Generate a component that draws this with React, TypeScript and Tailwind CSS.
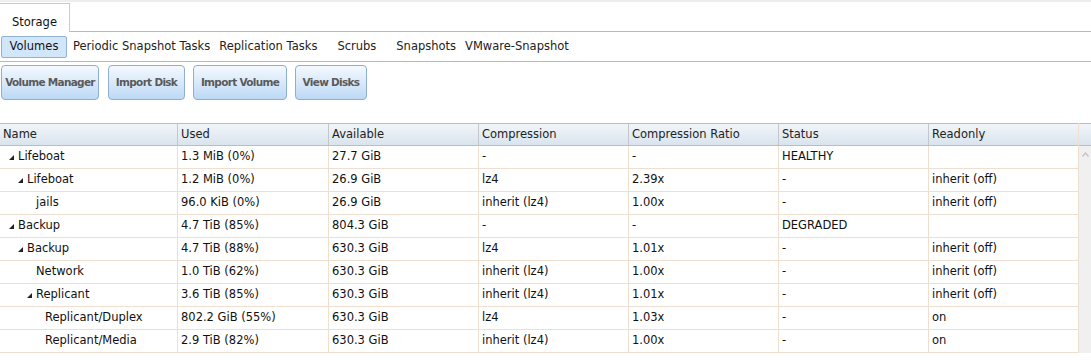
import React from 'react';

type Row = {
  name: string;
  level: number;
  open?: boolean;
  used: string;
  avail: string;
  comp: string;
  ratio: string;
  status: string;
  ro: string;
};

const rows: Row[] = [
  { name: 'Lifeboat', level: 0, open: true, used: '1.3 MiB (0%)', avail: '27.7 GiB', comp: '-', ratio: '-', status: 'HEALTHY', ro: '' },
  { name: 'Lifeboat', level: 1, open: true, used: '1.2 MiB (0%)', avail: '26.9 GiB', comp: 'lz4', ratio: '2.39x', status: '-', ro: 'inherit (off)' },
  { name: 'jails', level: 2, used: '96.0 KiB (0%)', avail: '26.9 GiB', comp: 'inherit (lz4)', ratio: '1.00x', status: '-', ro: 'inherit (off)' },
  { name: 'Backup', level: 0, open: true, used: '4.7 TiB (85%)', avail: '804.3 GiB', comp: '-', ratio: '-', status: 'DEGRADED', ro: '' },
  { name: 'Backup', level: 1, open: true, used: '4.7 TiB (88%)', avail: '630.3 GiB', comp: 'lz4', ratio: '1.01x', status: '-', ro: 'inherit (off)' },
  { name: 'Network', level: 2, used: '1.0 TiB (62%)', avail: '630.3 GiB', comp: 'inherit (lz4)', ratio: '1.00x', status: '-', ro: 'inherit (off)' },
  { name: 'Replicant', level: 2, open: true, used: '3.6 TiB (85%)', avail: '630.3 GiB', comp: 'inherit (lz4)', ratio: '1.01x', status: '-', ro: 'inherit (off)' },
  { name: 'Replicant/Duplex', level: 3, used: '802.2 GiB (55%)', avail: '630.3 GiB', comp: 'lz4', ratio: '1.03x', status: '-', ro: 'on' },
  { name: 'Replicant/Media', level: 3, used: '2.9 TiB (82%)', avail: '630.3 GiB', comp: 'inherit (lz4)', ratio: '1.00x', status: '-', ro: 'on' },
];

const subTabs = ['Periodic Snapshot Tasks', 'Replication Tasks', 'Scrubs', 'Snapshots', 'VMware-Snapshot'];
const subTabPad = ['ml-[6px]', 'ml-[9px]', 'ml-[20px]', 'ml-[20px]', 'ml-[9px]'];
const buttons = [
  { label: 'Volume Manager', cls: 'w-[98px] ml-px' },
  { label: 'Import Disk', cls: 'w-[77px] ml-[9px]' },
  { label: 'Import Volume', cls: 'w-[94px] ml-[8px]' },
  { label: 'View Disks', cls: 'w-[72px] ml-[8px]' },
];
const headers = ['Name', 'Used', 'Available', 'Compression', 'Compression Ratio', 'Status', 'Readonly'];
const colW = ['w-[177px]', 'w-[151px]', 'w-[150px]', 'w-[150px]', 'w-[150px]', 'w-[150px]', 'w-[150px]'];

function Expando() {
  return (
    <svg width="5" height="5" viewBox="0 0 5 5" className="shrink-0">
      <polygon points="5,0 5,5 0,5" fill="#222" />
    </svg>
  );
}

export default function App() {
  return (
    <div className="w-[1091px] h-[360px] overflow-hidden bg-white text-[11.5px] text-[#111] font-['DejaVu_Sans',Verdana,sans-serif]">
      {/* top tabs */}
      <div className="h-[2px] bg-[#eeeeee]" />
      <div className="flex h-[30px] items-end border-b border-[#b5b9c2]">
        <div className="h-[29px] w-[70px] bg-white border-t border-r border-[#c8ccd2] flex justify-center pt-[10px] -mb-px text-[#111]">
          Storage
        </div>
      </div>

      {/* sub tabs */}
      <div className="flex h-[30px] items-center pt-px border-b border-[#b5b9c2]">
        <div className="ml-px h-[22px] w-[66px] rounded-[2px] border border-[#8fb2d6] bg-[#d2e6fa] flex items-center justify-center">
          Volumes
        </div>
        {subTabs.map((t, i) => (
          <div key={t} className={`${subTabPad[i]} text-[#222] whitespace-nowrap`}>
            {t}
          </div>
        ))}
      </div>

      {/* buttons */}
      <div className="flex h-[61px] pt-[3px]">
        {buttons.map((b) => (
          <button
            key={b.label}
            className={`${b.cls} h-[35px] rounded-[4px] border border-[#8eaed2] bg-gradient-to-b from-[#f4f9fe] to-[#bdd9f5] text-[10.5px] font-bold tracking-[-0.7px] text-[#5a5a5a] whitespace-nowrap flex items-center justify-center pt-px`}
          >
            {b.label}
          </button>
        ))}
      </div>

      {/* grid */}
      <div className="flex">
        <div className="w-[1078px]">
          <div className="flex h-[23px] border-t border-b border-[#b9bdc4] bg-gradient-to-b from-[#f1f5f9] to-[#dae4ee] text-[#222]">
            {headers.map((h, i) => (
              <div key={h} className={`${colW[i]} flex items-center pl-[3px] pt-px ${i > 0 ? 'border-l border-[#c3c7cd]' : ''}`}>
                {h}
              </div>
            ))}
          </div>
          {rows.map((r, ri) => (
            <div key={ri} className="flex h-[23px] border-b border-[#eedfd0]">
              <div className={`${colW[0]} flex items-center`}>
                <div className="flex items-center" style={{ paddingLeft: 9 + r.level * 9 }}>
                  <div className="w-[9px] flex items-center">{r.open ? <Expando /> : null}</div>
                  <span>{r.name}</span>
                </div>
              </div>
              {[r.used, r.avail, r.comp, r.ratio, r.status, r.ro].map((v, ci) => (
                <div key={ci} className={`${colW[ci + 1]} flex items-center pl-[3px] border-l border-[#eedfd0]`}>
                  {v}
                </div>
              ))}
            </div>
          ))}
        </div>
        <div className="w-[13px] flex flex-col border-l border-[#eedfd0]">
          <div className="h-[23px] border-t border-b border-[#b9bdc4] bg-gradient-to-b from-[#f1f5f9] to-[#dae4ee]" />
          <div className="flex-1 bg-[#f0f0f0] flex justify-center pt-[6px]">
            <svg width="7" height="5" viewBox="0 0 7 5">
              <polyline points="0.5,4.5 3.5,1 6.5,4.5" fill="none" stroke="#c4c4c4" strokeWidth="1.3" />
            </svg>
          </div>
        </div>
      </div>
    </div>
  );
}
